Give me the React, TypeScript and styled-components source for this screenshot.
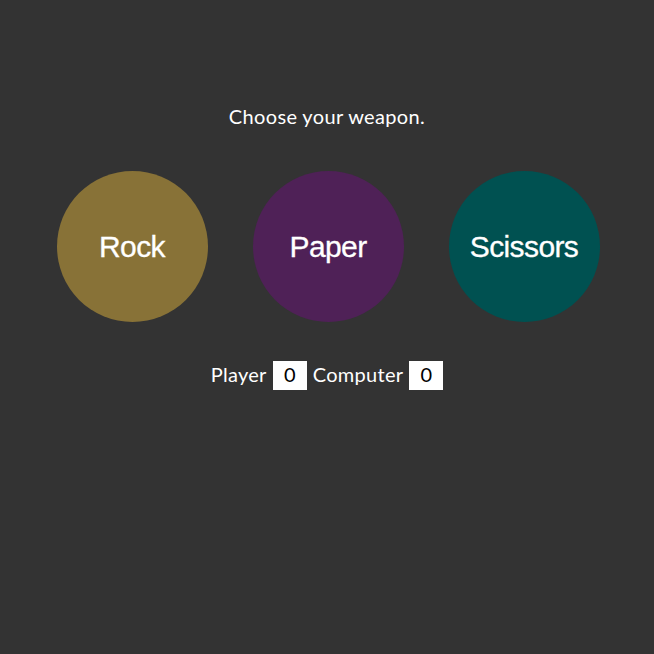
import React from "react";
import styled, { createGlobalStyle } from "styled-components";

const GlobalStyle = createGlobalStyle`
  html, body {
    margin: 0;
    background: #333333;
    height: 100%;
  }
  body {
    font-family: Lato, "Open Sans", sans-serif;
    color: #fff;
  }
`;

const Page = styled.main`
  display: flex;
  flex-direction: column;
  align-items: center;
  padding-top: 103px;
`;

const Title = styled.h1`
  margin: 0;
  font-size: 20px;
  font-weight: 400;
  line-height: 26px;
  letter-spacing: 0.35px;
`;

const Weapons = styled.div`
  display: flex;
  justify-content: center;
  gap: 45px;
  margin-top: 42px;
  margin-left: 2px;
`;

const Weapon = styled.button<{ $color: string }>`
  width: 151px;
  height: 151px;
  border-radius: 50%;
  border: none;
  background: ${(p) => p.$color};
  color: #fff;
  font-family: "Liberation Sans", Arial, sans-serif;
  font-size: 30px;
  letter-spacing: -0.6px;
  -webkit-text-stroke: 0.3px #fff;
  cursor: pointer;
  padding: 0;
`;

const Score = styled.div`
  display: flex;
  align-items: center;
  gap: 6px;
  margin-top: 39px;
  font-size: 20px;
  line-height: 24px;
  letter-spacing: 0.3px;
`;

const Label = styled.span`
  margin-top: -3px;
`;

const Count = styled.span`
  display: inline-flex;
  align-items: center;
  justify-content: center;
  box-sizing: border-box;
  width: 34px;
  height: 29px;
  padding-bottom: 3px;
  background: #fff;
  color: #000;
  letter-spacing: 0;
`;

const weapons = [
  { name: "Rock", color: "#887237" },
  { name: "Paper", color: "#4f2157" },
  { name: "Scissors", color: "#005151" },
];

export default function App() {
  return (
    <>
      <GlobalStyle />
      <Page>
        <Title>Choose your weapon.</Title>
        <Weapons>
          {weapons.map((w) => (
            <Weapon key={w.name} $color={w.color}>
              {w.name}
            </Weapon>
          ))}
        </Weapons>
        <Score>
          <Label>Player</Label>
          <Count>0</Count>
          <Label>Computer</Label>
          <Count>0</Count>
        </Score>
      </Page>
    </>
  );
}
